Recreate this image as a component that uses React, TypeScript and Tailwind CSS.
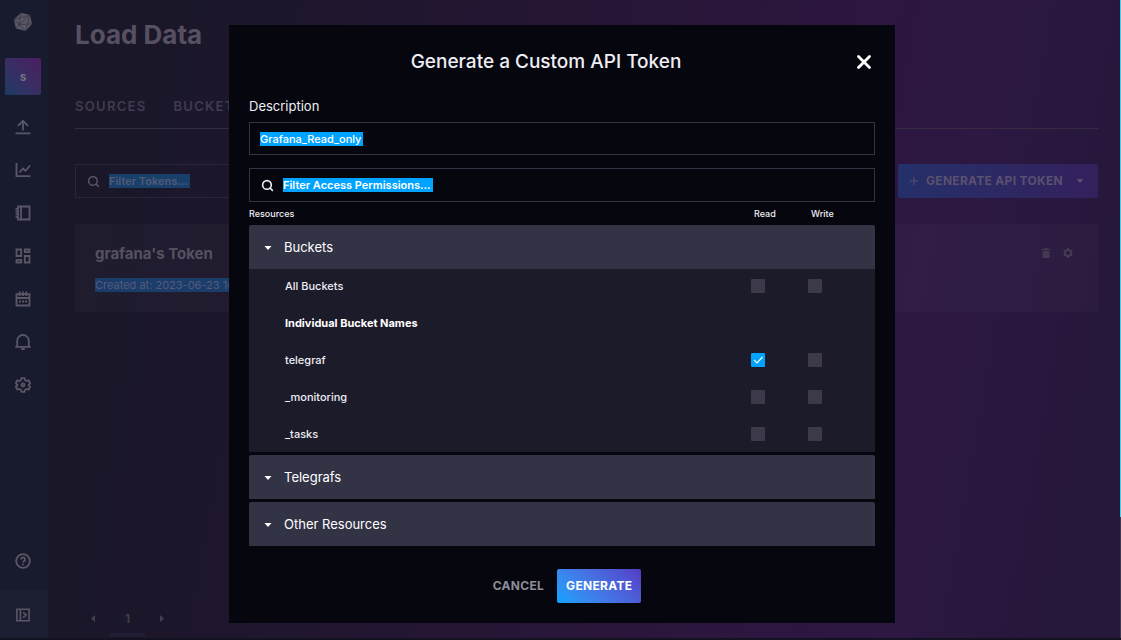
import type { InputHTMLAttributes, ReactNode } from "react";
import { Search, X } from "lucide-react";

const bucketRows = [
  { name: "All Buckets", read: false, write: false },
  { name: "Individual Bucket Names", heading: true },
  { name: "telegraf", read: true, write: false },
  { name: "_monitoring", read: false, write: false },
  { name: "_tasks", read: false, write: false },
];

function Icon({ children, size = 16 }: { children: ReactNode; size?: number }) {
  return (
    <svg width={size} height={size} viewBox="0 0 16 16" fill="none" stroke="currentColor" strokeWidth="1.8" aria-hidden="true">
      {children}
    </svg>
  );
}

const navItems = [
  {
    label: "Load Data",
    icon: (
      <Icon>
        <path d="M8 11.5V2M3 6.8 8 1.8l5 5M.5 14.3h15" />
      </Icon>
    ),
  },
  {
    label: "Data Explorer",
    icon: (
      <Icon>
        <path d="M1.5 1v13.2h14M4.5 10.5 8 6.5l2.5 2.3L15 3.5" />
      </Icon>
    ),
  },
  {
    label: "Notebooks",
    icon: (
      <Icon>
        <path d="M3 1.5h11.5v13H3zM6 1.5v13M.5 4H3M.5 6.7H3M.5 9.4H3M.5 12.1H3" />
      </Icon>
    ),
  },
  {
    label: "Dashboards",
    icon: (
      <Icon>
        <path d="M1.5 1.5h4.7V8H1.5zM9.8 1.5h4.7v2.7H9.8zM9.8 8h4.7v6.5H9.8zM1.5 11.8h4.7v2.7H1.5z" />
      </Icon>
    ),
  },
  {
    label: "Tasks",
    icon: (
      <Icon>
        <path d="M1.5 3.2h13v11.3h-13zM1.5 7h13M4.7.5V5M8 .5V5M11.3.5V5" />
        <path d="M4 10.5h8.5" strokeDasharray="2 1" />
      </Icon>
    ),
  },
  {
    label: "Alerts",
    icon: (
      <Icon>
        <path d="M.3 12.8h15.4M2.2 12.5V6.8a5.8 5.8 0 0 1 11.6 0v5.7M6.3 15h3.4" />
      </Icon>
    ),
  },
  {
    label: "Settings",
    icon: (
      <Icon>
        <path d="M6.4 1.2h3.2l.5 2 1.5.8 2-.6 1.6 2.8-1.5 1.5v.6l1.5 1.5-1.6 2.8-2-.6-1.5.8-.5 2H6.400l-.5-2-1.5-.8-2 .6L.8 9.8l1.5-1.500v-.6L.8 6.2l1.6-2.8 2 .6 1.5-.8z" />
        <circle cx="8" cy="8" r="1.5" />
      </Icon>
    ),
  },
];

function CaretDown() {
  return (
    <svg width="8" height="4" viewBox="0 0 8 4" fill="currentColor" aria-hidden="true">
      <path d="M.5 0h7L4 4z" />
    </svg>
  );
}

// Text field that is only as wide as its text, so the background reads as a selection
function SelectedInput({ className, ...props }: InputHTMLAttributes<HTMLInputElement>) {
  return <input className={`field-sizing-content h-3.5 pr-0.5 leading-3.5 outline-none ${className}`} {...props} />;
}

function Sidebar() {
  return (
    <nav className="flex w-12 shrink-0 flex-col bg-[#181b2e] text-[#595766]">
      <a href="#home" aria-label="Home" className="mt-3 flex h-5 justify-center pr-0.5">
        <svg width="20" height="20" viewBox="0 0 20 20" aria-hidden="true">
          <path d="M8 .8 17 3l2 9-6.5 7L3 16.5.8 7.5z" fill="currentColor" />
          <path d="M8 .8 6 12.5l6.5 6.5M6 12.5l13-.5M6 12.5.8 7.5M17 3 6 12.5M17 3l-4.5 16M.8 7.5 17 3M6 12.5l-3 4" stroke="#33323f" strokeWidth=".7" fill="none" />
        </svg>
      </a>
      <button className="mt-[26px] ml-[5px] flex h-[37px] w-9 items-center justify-center rounded-xs bg-linear-to-tr from-[#1a3a63] to-[#4b1c62] text-xs font-bold text-[#777284]">
        s
      </button>
      <div className="mt-2.5 flex flex-col">
        {navItems.map((item) => (
          <a key={item.label} href="#nav" aria-label={item.label} className="flex h-[43px] items-center justify-center pr-0.5">
            {item.icon}
          </a>
        ))}
      </div>
      <a href="#help" aria-label="Help" className="mt-auto mb-[21px] flex justify-center pr-0.5">
        <Icon>
          <circle cx="8" cy="8" r="6.8" />
          <path d="M6 6.5a2 2 0 1 1 2.8 1.8c-.6.3-.8.6-.8 1.2M8 10.8V12.200" />
        </Icon>
      </a>
      <button aria-label="Expand" className="flex h-12 items-center justify-center bg-[#1b1e30] pt-0.5 pr-0.5">
        <Icon size={14}>
          <path d="M1 1.5h14v13H1zM5 1.5v13M8 5l3.5 3L8 11" />
        </Icon>
      </button>
    </nav>
  );
}

function LoadDataPage() {
  return (
    <main className="flex min-w-0 flex-1 flex-col pr-[23px] pl-[27px] text-[#575062]">
      <h1 className="mt-[19px] text-[26px] leading-8 font-bold">Load Data</h1>
      <div className="mt-[33px] flex h-[45px] items-center gap-[27px] border-b border-[#352c43] pt-0.5 text-[13px] font-semibold tracking-widest text-[#423a50]">
        <a href="#sources">SOURCES</a>
        <a href="#buckets">BUCKETS</a>
      </div>
      <div className="mt-[35px] flex justify-between">
        <label className="flex h-[34px] w-72 items-center gap-[9px] border border-[#2c2439] pl-[11px]">
          <Search size={13} strokeWidth={3} />
          <SelectedInput
            aria-label="Filter Tokens"
            placeholder="Filter Tokens..."
            className="bg-[#18406b] text-[11px] font-semibold placeholder:text-[#535a77]"
          />
        </label>
        <button className="flex h-[34px] w-[200px] items-center gap-2 rounded-xs bg-linear-to-r from-[#24306a] to-[#33205c] pr-3.5 pl-3 text-xs font-bold tracking-wide text-[#5b5070]">
          <svg width="8" height="8" viewBox="0 0 8 8" stroke="currentColor" aria-hidden="true">
            <path d="M4 0v8M0 4h8" />
          </svg>
          <span className="flex-1 text-left">GENERATE API TOKEN</span>
          <CaretDown />
        </button>
      </div>
      <section className="mt-[26px] flex h-[88px] justify-between bg-[#ffffff06] px-5 pt-5">
        <div>
          <h2 className="text-[15px] leading-5 font-bold">grafana's Token</h2>
          <p className="mt-3.5 bg-[#1b3d6c] text-[11px] leading-3.5 text-[#565a78]">Created at: 2023-06-23 16:20:41</p>
        </div>
        <div className="flex h-[18px] items-center gap-3 pr-[5px] text-[#453853]">
          <button aria-label="Delete">
            <svg width="10" height="10" viewBox="0 0 10 10" fill="currentColor" aria-hidden="true">
              <path d="M3.5 0h3v1h3v1.2h-9V1h3zM1.500 3h7v7h-7z" />
            </svg>
          </button>
          <button aria-label="Configure">
            <svg width="10" height="10" viewBox="0 0 10 10" fill="none" stroke="currentColor" strokeWidth="2" aria-hidden="true">
              <circle cx="5" cy="5" r="3" />
              <path d="M5 0v2M5 8v2M.7 2.5l1.7 1M7.6 6.5l1.7 1M9.3 2.5l-1.7 1M2.4 6.5l-1.7 1" />
            </svg>
          </button>
        </div>
      </section>
      <div className="mt-auto flex items-end pl-4 text-xs font-semibold text-[#453f52]">
        <button aria-label="Previous page" className="mb-4">
          <svg width="4" height="7" viewBox="0 0 4 7" fill="currentColor" aria-hidden="true">
            <path d="M4 0v7L0 3.5z" />
          </svg>
        </button>
        <button className="mx-[15px] mb-px w-[35px] border-b-4 border-[#221d33] pb-1.5">1</button>
        <button aria-label="Next page" className="mb-4">
          <svg width="4" height="7" viewBox="0 0 4 7" fill="currentColor" aria-hidden="true">
            <path d="M0 0v7l4-3.5z" />
          </svg>
        </button>
      </div>
    </main>
  );
}

function PermissionCheckbox({ label, checked }: { label: string; checked?: boolean }) {
  return (
    <label className="relative flex size-3.5">
      <input
        type="checkbox"
        aria-label={label}
        defaultChecked={checked}
        className="peer size-3.5 appearance-none rounded-[1px] bg-[#3c3a4a] checked:bg-[#00a3ff]"
      />
      <svg
        viewBox="0 0 14 14"
        fill="none"
        stroke="white"
        strokeWidth="1.2"
        className="pointer-events-none absolute inset-0 hidden size-3.5 peer-checked:block"
        aria-hidden="true"
      >
        <path d="m3 6.8 3 3L11.5 4" />
      </svg>
    </label>
  );
}

function AccordionHeader({ title, open = false }: { title: string; open?: boolean }) {
  return (
    <button aria-expanded={open} className="flex h-11 w-full items-center gap-3 rounded-t-xs bg-[#333346] pt-px pl-[15px] text-[13px] text-white">
      <CaretDown />
      {title}
    </button>
  );
}

function BucketTable() {
  return (
    <table className="w-full table-fixed bg-[#1c1b2a] text-left text-[11px] text-[#eeeef4]">
      <tbody>
        {bucketRows.map((row) => (
          <tr key={row.name} className="h-[37px] last:h-[35px] [&>*]:pb-[3px] last:[&>*]:pb-px">
            <th scope="row" className={`pl-9 ${row.heading ? "font-bold text-white" : "font-medium"}`}>
              {row.name}
            </th>
            <td className="w-[57px]">{!row.heading && <PermissionCheckbox label={`Read ${row.name}`} checked={row.read} />}</td>
            <td className="w-[67px]">{!row.heading && <PermissionCheckbox label={`Write ${row.name}`} checked={row.write} />}</td>
          </tr>
        ))}
      </tbody>
    </table>
  );
}

function TokenDialog() {
  return (
    <div role="dialog" aria-labelledby="dialog-title" className="w-full max-w-[666px] bg-[#06060e] px-5 py-5 text-[#eeeef4]">
      <header className="flex h-[34px] items-center">
        <h2 id="dialog-title" className="flex-1 text-center text-[19px] font-medium">
          Generate a Custom API Token
        </h2>
        <button aria-label="Close" className="flex w-8 justify-end text-white">
          <X size={22} strokeWidth={3} />
        </button>
      </header>
      <label htmlFor="description" className="mt-[17px] block text-[13px] leading-5">
        Description
      </label>
      <div className="mt-1.5 flex h-[33px] items-center border border-[#333346] pl-2.5">
        <SelectedInput id="description" defaultValue="Grafana_Read_only" className="bg-[#00a3ff] text-[11px] font-medium text-white" />
      </div>
      <label className="mt-[13px] flex h-[34px] items-center gap-[9px] border border-[#333346] pl-[11px]">
        <Search size={13} strokeWidth={3} />
        <SelectedInput
          aria-label="Filter Access Permissions"
          placeholder="Filter Access Permissions..."
          className="bg-[#00a3ff] text-[11px] font-semibold placeholder:text-white"
        />
      </label>
      <div className="flex h-[23px] items-center text-[9px] font-medium">
        <span className="flex-1">Resources</span>
        <span className="w-[57px]">Read</span>
        <span className="w-16">Write</span>
      </div>
      <div className="flex flex-col gap-[3px]">
        <div>
          <AccordionHeader title="Buckets" open />
          <BucketTable />
        </div>
        <AccordionHeader title="Telegrafs" />
        <AccordionHeader title="Other Resources" />
      </div>
      <footer className="mt-[23px] flex justify-center gap-[3px] text-xs font-bold tracking-wide">
        <button className="h-[34px] px-2.5 text-[#8e8d99]">CANCEL</button>
        <button className="h-[34px] rounded-xs bg-linear-45 from-[#00a3ff] to-[#513cc6] px-[9px] text-white">GENERATE</button>
      </footer>
    </div>
  );
}

export default function App() {
  return (
    <div className="relative flex min-h-screen border-b-2 border-[#121220] bg-linear-[100deg,#1a1729_12%,#1e162c_25%,#2d163f_70%,#2c1841_82%,#25173a_95%] font-['Inter',sans-serif]">
      <Sidebar />
      <LoadDataPage />
      <div className="absolute inset-y-0 right-0 flex w-px flex-col">
        <div className="h-[81%] bg-[#3fd0ea]" />
        <div className="flex-1 bg-[#3e3750]" />
      </div>
      <div className="absolute inset-0 flex items-start justify-center pt-[25px] pl-[3px]">
        <TokenDialog />
      </div>
    </div>
  );
}
